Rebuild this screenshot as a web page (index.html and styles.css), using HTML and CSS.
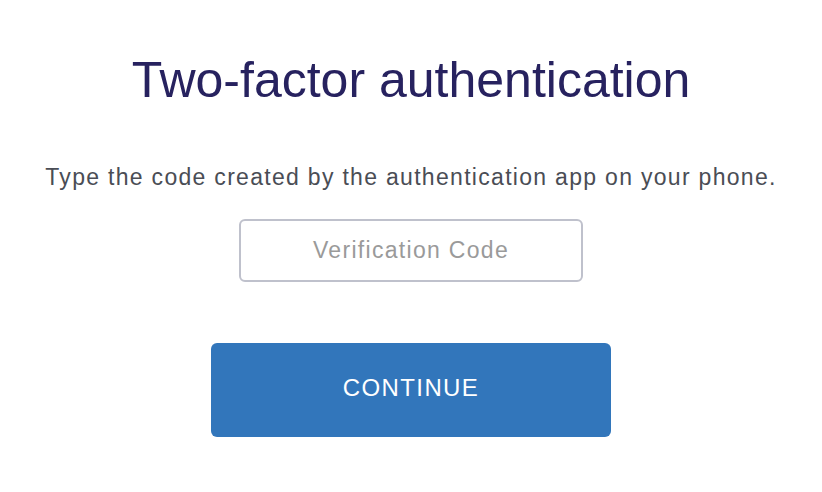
FILE: index.html
```html
<!DOCTYPE html>
<html>
<head>
<meta charset="utf-8">
<link rel="stylesheet" href="styles.css">
</head>
<body>
<main class="page">
  <h1 class="title">Two-factor authentication</h1>
  <p class="lead">Type the code created by the authentication app on your phone.</p>
  <input class="code" type="text" placeholder="Verification Code">
  <button class="continue" type="button">CONTINUE</button>
</main>
</body>
</html>
```

FILE: styles.css
```css
html, body {
  margin: 0;
  padding: 0;
  background: #ffffff;
}
.page {
  display: flex;
  flex-direction: column;
  align-items: center;
  font-family: "Liberation Sans", Arial, sans-serif;
  padding-top: 52px;
}
.title {
  margin: 0;
  font-size: 50px;
  font-weight: 400;
  line-height: 56px;
  color: #27225f;
}
.lead {
  margin: 56px 0 0;
  font-size: 23px;
  line-height: 26px;
  letter-spacing: 1.3px;
  color: #4a4d55;
}
.code {
  box-sizing: border-box;
  margin-top: 29px;
  width: 344px;
  height: 63px;
  border: 2px solid #bfc1cc;
  border-radius: 6px;
  font-family: inherit;
  font-size: 23px;
  letter-spacing: 1.3px;
  text-align: center;
  color: #333;
  outline: none;
}
.code::placeholder {
  color: #9a9a9a;
}
.continue {
  margin-top: 61px;
  width: 400px;
  height: 94px;
  padding: 0 0 4px;
  border: none;
  border-radius: 6px;
  background: #3276bb;
  color: #ffffff;
  font-family: inherit;
  font-size: 24px;
  letter-spacing: 1.4px;
}
```
